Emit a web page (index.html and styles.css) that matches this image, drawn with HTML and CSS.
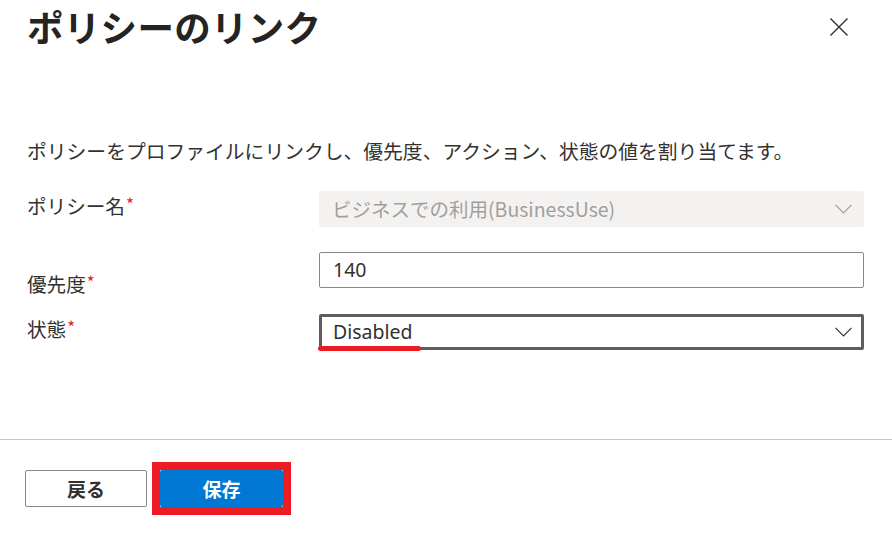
FILE: index.html
```html
<!DOCTYPE html>
<html lang="ja">
<head>
<meta charset="utf-8">
<title>ポリシーのリンク</title>
<link rel="stylesheet" href="styles.css">
</head>
<body>
<div class="panel">
  <header class="head">
    <h1 class="title">ポリシーのリンク</h1>
    <button class="close" aria-label="閉じる">
      <svg width="18" height="18" viewBox="0 0 18 18"><path d="M0.5 0.5 L17.5 17.5 M17.5 0.5 L0.5 17.5" stroke="#323130" stroke-width="1.4" fill="none"/></svg>
    </button>
  </header>
  <p class="desc">ポリシーをプロファイルにリンクし、優先度、アクション、状態の値を割り当てます。</p>
  <div class="form">
    <div class="label l1">ポリシー名<span class="req">*</span></div>
    <div class="field disabled">
      <span>ビジネスでの利用(BusinessUse)</span>
      <svg class="chev" width="17" height="10" viewBox="0 0 17 10"><path d="M0.5 0.8 L8.5 8.8 L16.5 0.8" stroke="#a19f9d" stroke-width="1.2" fill="none"/></svg>
    </div>
    <div class="label l2">優先度<span class="req">*</span></div>
    <div class="field input"><span>140</span></div>
    <div class="label l3">状態<span class="req">*</span></div>
    <div class="field select focused">
      <span>Disabled</span>
      <svg class="chev" width="17" height="10" viewBox="0 0 17 10"><path d="M0.5 0.8 L8.5 8.8 L16.5 0.8" stroke="#323130" stroke-width="1.2" fill="none"/></svg>
      <div class="mark"></div>
    </div>
  </div>
  <footer class="foot">
    <button class="btn back">戻る</button>
    <div class="highlight"><button class="btn save">保存</button></div>
  </footer>
</div>
</body>
</html>
```
FILE: styles.css
```css
html, body {
  margin: 0;
  padding: 0;
  background: #ffffff;
}
body {
  font-family: "Noto Sans", "Noto Sans CJK JP", sans-serif;
  color: #323130;
  width: 892px;
  height: 553px;
  overflow: hidden;
}
.panel {
  display: flex;
  flex-direction: column;
}
.head {
  display: flex;
  align-items: center;
  justify-content: space-between;
  height: 54px;
  padding: 0 44px 0 27px;
}
.title {
  margin: 0;
  font-family: "Noto Sans CJK JP", sans-serif;
  font-size: 36.5px;
  font-weight: 700;
  line-height: 54px;
  color: #252423;
  letter-spacing: 0.3px;
}
.close {
  border: 0;
  background: transparent;
  padding: 0;
  width: 18px;
  height: 18px;
  display: flex;
}
.desc {
  margin: 84px 0 0 27px;
  font-family: "Noto Sans CJK JP", sans-serif;
  font-size: 19.8px;
  line-height: 26px;
  color: #323130;
}
.form {
  display: grid;
  grid-template-columns: 292px 545px;
  grid-template-rows: 36px 36px 36px;
  row-gap: 25px;
  margin: 27px 0 0 27px;
  align-items: start;
}
.label {
  font-family: "Noto Sans CJK JP", sans-serif;
  font-size: 19.6px;
  line-height: 26px;
  color: #323130;
}
.label.l1 { margin-top: 2px; }
.label.l2 { margin-top: 19px; }
.label.l3 { margin-top: 3px; }
.req {
  color: #e3262b;
  font-size: 17px;
  position: relative;
  top: -3px;
  margin-left: 1px;
}
.field {
  position: relative;
  box-sizing: border-box;
  height: 36px;
  border-radius: 2px;
  display: flex;
  align-items: center;
  justify-content: space-between;
  padding: 0 12px 0 13px;
  font-size: 19.5px;
  font-family: "Noto Sans", "Noto Sans CJK JP", sans-serif;
}
.field span {
  line-height: 26px;
}
.field.disabled {
  background: #f3f2f1;
  color: #a19f9d;
  font-family: "Noto Sans CJK JP", sans-serif;
}
.field.input {
  border: 1px solid #8a8886;
  padding-left: 13px;
}
.field.select {
  border: 3px solid #605e5c;
  padding-left: 11px;
  padding-right: 9px;
  margin-top: 1px;
  height: 36px;
}
.chev { display: block; }
.mark {
  position: absolute;
  left: -4px;
  top: 29px;
  width: 103px;
  height: 5px;
  border-radius: 3px;
  background: #ed1c24;
}
.foot {
  margin-top: 90px;
  border-top: 1px solid #c8c6c4;
  display: flex;
  align-items: center;
  gap: 5px;
  padding: 22px 0 0 25px;
}
.btn {
  box-sizing: border-box;
  height: 37px;
  border-radius: 2px;
  font-family: "Noto Sans CJK JP", sans-serif;
  font-size: 19px;
  font-weight: 700;
  padding: 0;
  line-height: 1;
}
.back {
  width: 122px;
  border: 1px solid #8a8886;
  background: #ffffff;
  color: #323130;
}
.highlight {
  border: 8px solid #ed1c24;
  display: flex;
}
.save {
  width: 123px;
  border: 0;
  background: #0078d4;
  color: #ffffff;
}
```
